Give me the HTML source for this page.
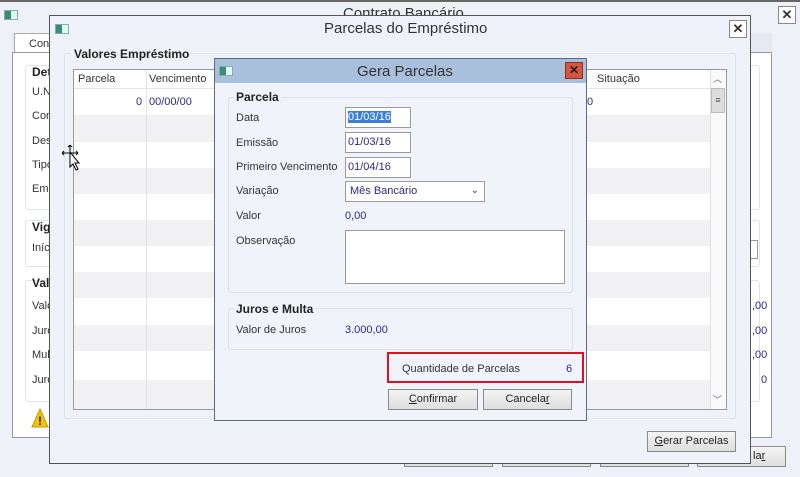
<!DOCTYPE html>
<html><head><meta charset="utf-8"><style>
*{box-sizing:border-box;margin:0;padding:0}
body{width:800px;height:477px;overflow:hidden;background:#eef1f8;font-family:"Liberation Sans",sans-serif;font-size:11px;color:#333;position:relative}
.a{position:absolute}
.t{position:absolute;white-space:nowrap}
.b{font-weight:bold;font-size:12px;color:#222}
.blue{color:#2c2a8a}
.btn{position:absolute;height:21px;border:1px solid #8a8a8a;background:linear-gradient(#f4f4f4,#dedede);text-align:center;line-height:19px;font-size:11px;color:#222}
.inp{position:absolute;background:#fff;border:1px solid #9a9a9a;color:#2c2a8a;font-size:11px;padding-left:2px;line-height:18px}
.grp{position:absolute;border:1px solid #dfe3ec;border-radius:3px}
.ico{position:absolute;width:14px;height:10px;border:1px solid #8aa;background:linear-gradient(90deg,#3a8a7a 0 50%,#dfe 50%)}
.x{position:absolute;width:18px;height:18px;border:1px solid #888;background:#fff;font-weight:bold;font-size:13px;text-align:center;line-height:15px}
</style></head><body>
<div class="a" style="left:0;top:0;width:800px;height:2px;background:#666"></div>
<div class="ico" style="left:4px;top:10px"></div>
<div class="t" style="left:343px;top:5px;font-size:15px;color:#333">Contrato Bancário</div>
<div class="x" style="left:778px;top:6px">✕</div>
<div class="a" style="left:12px;top:33px;width:760px;height:20px;background:#e6e9f1"></div>
<div class="a" style="left:14px;top:33px;width:40px;height:20px;background:#fff;border:1px solid #aaa;border-bottom:none"></div>
<div class="t" style="left:29px;top:38px">Contr</div>
<div class="a" style="left:12px;top:52px;width:760px;height:386px;background:#fff;border:1px solid #999"></div>
<div class="grp" style="left:25px;top:65px;width:735px;height:145px"></div>
<div class="grp" style="left:25px;top:220px;width:735px;height:47px"></div>
<div class="grp" style="left:25px;top:280px;width:735px;height:122px"></div>
<div class="t b" style="left:32px;top:65px">Det</div>
<div class="t" style="left:32px;top:86px">U.N</div>
<div class="t" style="left:32px;top:110px">Con</div>
<div class="t" style="left:32px;top:135px">Des</div>
<div class="t" style="left:32px;top:159px">Tipo</div>
<div class="t" style="left:32px;top:183px">Emp</div>
<div class="t b" style="left:32px;top:220px">Vig</div>
<div class="t" style="left:32px;top:242px">Iníc</div>
<div class="t b" style="left:32px;top:276px">Val</div>
<div class="t" style="left:32px;top:300px">Valo</div>
<div class="t" style="left:32px;top:325px">Juro</div>
<div class="t" style="left:32px;top:349px">Mult</div>
<div class="t" style="left:32px;top:374px">Juro</div>
<div class="t blue" style="left:752px;top:300px">,00</div>
<div class="t blue" style="left:752px;top:325px">,00</div>
<div class="t blue" style="left:752px;top:349px">,00</div>
<div class="t blue" style="left:761px;top:374px">0</div>
<div class="a" style="left:745px;top:240px;width:13px;height:19px;border:1px solid #999;background:#fff"></div>
<svg class="a" style="left:31px;top:408px" width="18" height="20"><path d="M9 1L17 19H1Z" fill="#f4c400" stroke="#c90"/><text x="9" y="17" font-size="12" font-weight="bold" text-anchor="middle" fill="#222" font-family="Liberation Sans">!</text></svg>
<div class="btn" style="left:404px;top:446px;width:89px"></div>
<div class="btn" style="left:502px;top:446px;width:89px"></div>
<div class="btn" style="left:600px;top:446px;width:89px"></div>
<div class="btn" style="left:697px;top:446px;width:89px;text-align:left;padding-left:55px">la<u>r</u></div>
<div class="a" style="left:49px;top:15px;width:702px;height:449px;background:#f0f2fa;border:1px solid #555"></div>
<div class="a" style="left:50px;top:16px;width:700px;height:25px;background:#eef1fa"></div>
<div class="ico" style="left:55px;top:24px"></div>
<div class="t" style="left:324px;top:20px;font-size:15px;color:#333">Parcelas do Empréstimo</div>
<div class="x" style="left:729px;top:20px">✕</div>
<div class="grp" style="left:64px;top:53px;width:672px;height:366px"></div>
<div class="t b" style="left:71px;top:47px;background:#f0f2fa;padding:0 3px">Valores Empréstimo</div>
<div class="a" style="left:73px;top:69px;width:654px;height:341px;background:#fff;border:1px solid #999"></div>
<div class="a" style="left:74px;top:115px;width:636px;height:27px;background:#f1f1f3"></div>
<div class="a" style="left:74px;top:168px;width:636px;height:26px;background:#f1f1f3"></div>
<div class="a" style="left:74px;top:220px;width:636px;height:26px;background:#f1f1f3"></div>
<div class="a" style="left:74px;top:272px;width:636px;height:26px;background:#f1f1f3"></div>
<div class="a" style="left:74px;top:325px;width:636px;height:26px;background:#f1f1f3"></div>
<div class="a" style="left:74px;top:380px;width:636px;height:29px;background:#f1f1f3"></div>
<div class="a" style="left:74px;top:88px;width:636px;height:1px;background:#e6e6e6"></div>
<div class="a" style="left:146px;top:70px;width:1px;height:339px;background:#e4e4e4"></div>
<div class="t" style="left:78px;top:73px">Parcela</div>
<div class="t" style="left:149px;top:73px">Vencimento</div>
<div class="t" style="left:597px;top:73px">Situação</div>
<div class="t blue" style="left:136px;top:96px">0</div>
<div class="t blue" style="left:149px;top:96px">00/00/00</div>
<div class="t blue" style="left:587px;top:96px">0</div>
<div class="a" style="left:710px;top:70px;width:16px;height:339px;background:#fafafa;border-left:1px solid #e0e0e0"></div>
<div class="t" style="left:713px;top:72px;font-size:9px;color:#666">︿</div>
<div class="a" style="left:711px;top:88px;width:14px;height:25px;background:#ddd;border:1px solid #bbb;text-align:center;font-size:9px;line-height:22px;color:#555">≡</div>
<div class="t" style="left:713px;top:393px;font-size:9px;color:#666">﹀</div>
<div class="btn" style="left:647px;top:431px;width:89px"><u>G</u>erar Parcelas</div>
<div class="a" style="left:214px;top:58px;width:373px;height:363px;background:#f0f3fa;border:1px solid #5a6a80"></div>
<div class="a" style="left:215px;top:59px;width:371px;height:24px;background:#a9c0dc"></div>
<div class="ico" style="left:219px;top:66px"></div>
<div class="t" style="left:357px;top:63px;font-size:15px;color:#333">Gera Parcelas</div>
<div class="a" style="left:565px;top:62px;width:18px;height:17px;background:#d6553f;border:1px solid #8a3020;color:#222;font-weight:bold;font-size:12px;text-align:center;line-height:15px">✕</div>
<div class="grp" style="left:228px;top:97px;width:345px;height:196px"></div>
<div class="t b" style="left:234px;top:90px;background:#f0f3fa;padding:0 2px">Parcela</div>
<div class="t" style="left:236px;top:112px">Data</div>
<div class="t" style="left:236px;top:137px">Emissão</div>
<div class="t" style="left:236px;top:161px">Primeiro Vencimento</div>
<div class="t" style="left:236px;top:185px">Variação</div>
<div class="t" style="left:236px;top:210px">Valor</div>
<div class="t" style="left:236px;top:235px">Observação</div>
<div class="inp" style="left:345px;top:107px;width:66px;height:21px"><span style="background:#3b7fd6;color:#fff">01/03/16</span></div>
<div class="inp" style="left:345px;top:132px;width:66px;height:21px">01/03/16</div>
<div class="inp" style="left:345px;top:157px;width:66px;height:21px">01/04/16</div>
<div class="inp" style="left:345px;top:181px;width:140px;height:21px;padding-left:4px">Mês Bancário<span style="position:absolute;right:5px;top:0;color:#444;font-size:10px">⌄</span></div>
<div class="t blue" style="left:345px;top:210px">0,00</div>
<div class="inp" style="left:345px;top:230px;width:220px;height:54px"></div>
<div class="grp" style="left:228px;top:308px;width:345px;height:42px"></div>
<div class="t b" style="left:234px;top:302px;background:#f0f3fa;padding:0 2px">Juros e Multa</div>
<div class="t" style="left:236px;top:324px">Valor de Juros</div>
<div class="t blue" style="left:345px;top:324px">3.000,00</div>
<div class="a" style="left:387px;top:352px;width:197px;height:31px;border:2px solid #e01020"></div>
<div class="t" style="left:402px;top:363px">Quantidade de Parcelas</div>
<div class="t blue" style="left:566px;top:363px">6</div>
<div class="btn" style="left:388px;top:389px;width:90px"><u>C</u>onfirmar</div>
<div class="btn" style="left:483px;top:389px;width:89px">Cancela<u>r</u></div>
<svg class="a" style="left:62px;top:145px" width="22" height="28"><path d="M8 0v16M0 8h16M8 0l-2 2M8 0l2 2M0 8l2-2M0 8l2 2M16 8l-2-2M16 8l-2 2" stroke="#000" fill="none"/><path d="M8 7v15l3-3 3 6 2-1-3-6h4Z" fill="#fff" stroke="#000"/></svg>
</body></html>
